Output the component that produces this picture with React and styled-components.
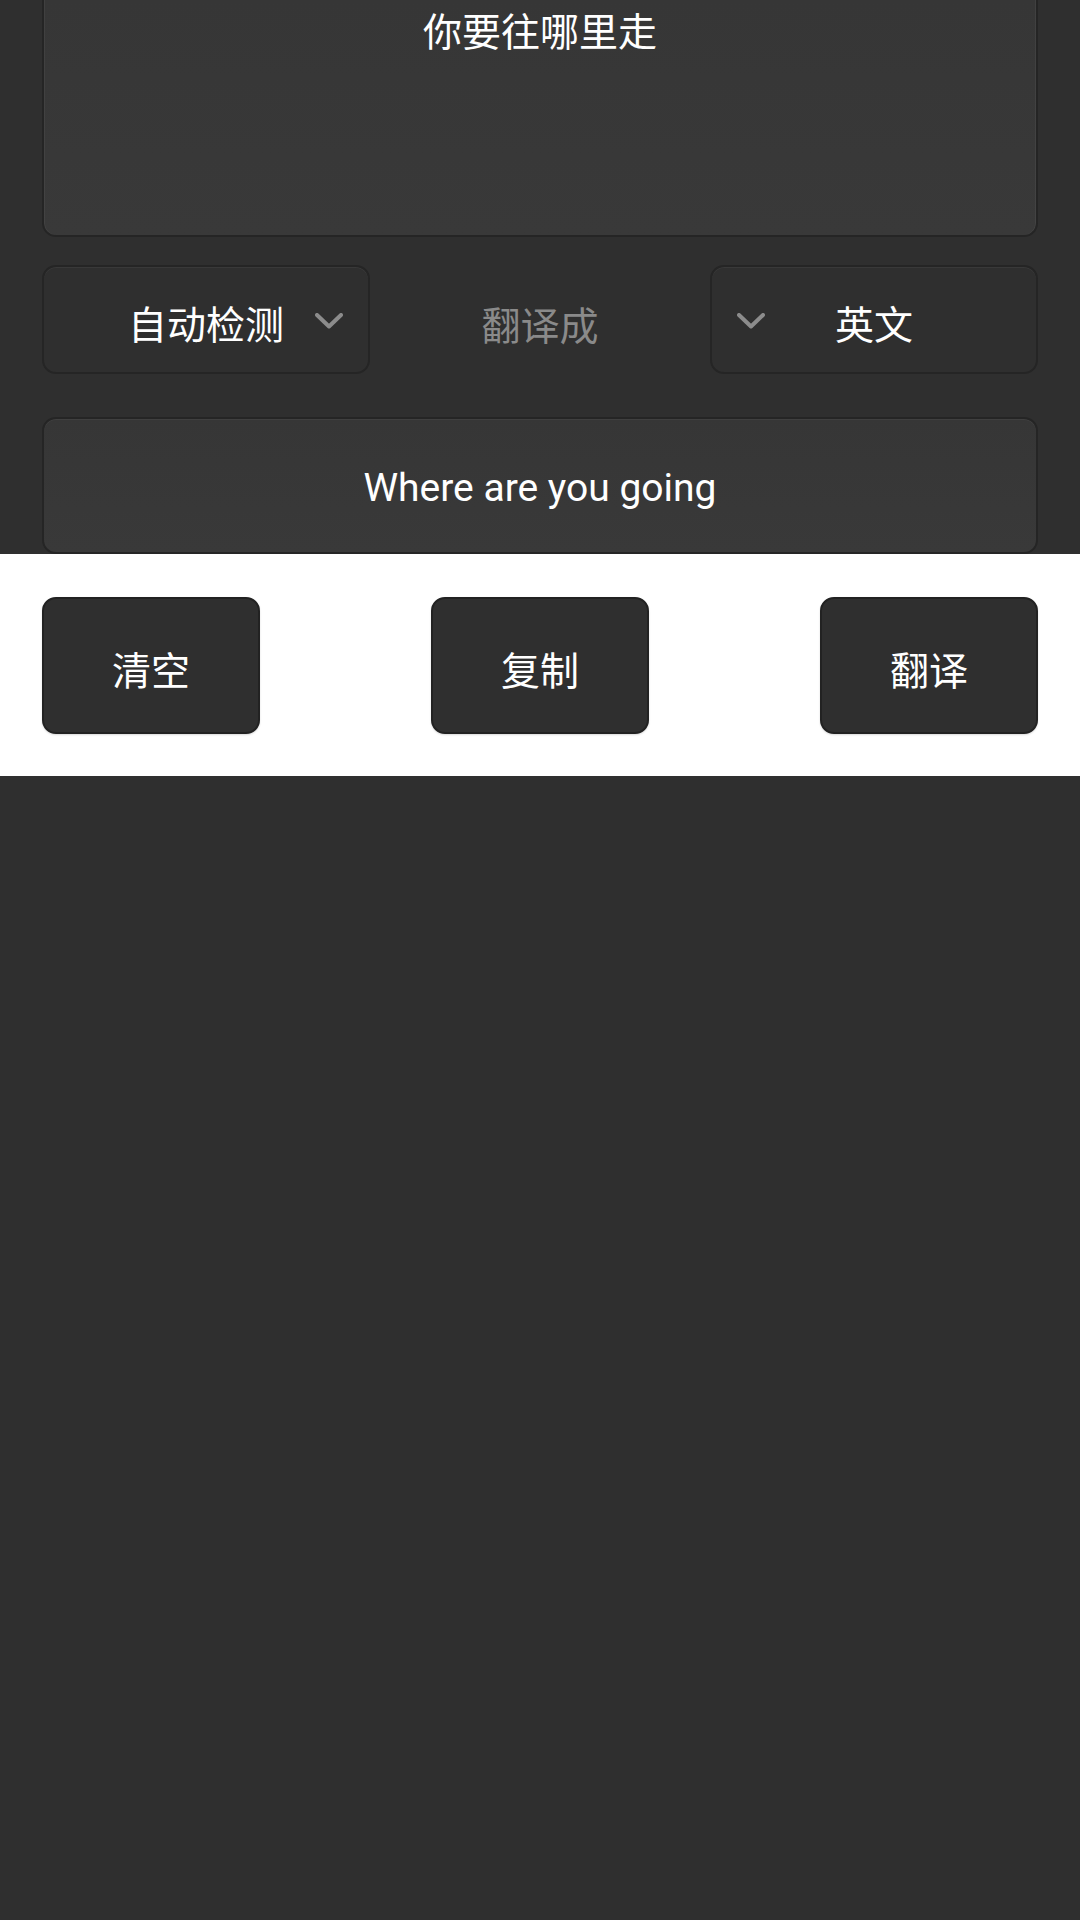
import React from "react";
import styled, { createGlobalStyle } from "styled-components";

const GlobalStyle = createGlobalStyle`
  html, body {
    margin: 0;
    padding: 0;
    background: #2f2f2f;
  }
  body {
    font-family: Roboto, "Noto Sans CJK SC", sans-serif;
    color: #ffffff;
  }
`;

let Page = styled.div`
  min-height: 1920px;
  background: #2f2f2f;
`;

let Panel = styled.div`
  padding: 0 42px;
  display: flex;
  flex-direction: column;
`;

let SourceBox = styled.div`
  height: 237px;
  box-sizing: border-box;
  background: linear-gradient(180deg, #363636 0%, #393939 100%);
  border: 2px solid #252525;
  border-top: none;
  border-radius: 0 0 14px 14px;
  box-shadow: inset 1px 0 0 rgba(255, 255, 255, 0.05), inset -1px 0 0 rgba(255, 255, 255, 0.05);
  padding-top: 8px;
  text-align: center;
  font-size: 39px;
  line-height: 50px;
`;

let LangRow = styled.div`
  margin-top: 28px;
  height: 109px;
  display: grid;
  grid-template-columns: 328px 1fr 328px;
  align-items: center;
`;

let LangSelect = styled.div`
  height: 109px;
  box-sizing: border-box;
  border: 2px solid #252525;
  border-radius: 14px;
  background: #2f2f2f;
  box-shadow: inset 0 1px 0 rgba(255, 255, 255, 0.05);
  padding: 0 25px;
  display: grid;
  grid-template-columns: 28px 1fr 28px;
  align-items: center;
`;

let LangName = styled.span`
  grid-column: 2;
  text-align: center;
  font-size: 39px;
  padding-top: 4px;
`;

let Arrow = styled.svg`
  grid-column: ${(p) => (p.$side === "left" ? 1 : 3)};
  grid-row: 1;
  width: 28px;
  height: 16px;
  margin-top: 3px;
`;

let ToLabel = styled.div`
  text-align: center;
  font-size: 39px;
  color: #8a8a8a;
  padding-top: 6px;
`;

let ResultBox = styled.div`
  margin-top: 43px;
  height: 137px;
  box-sizing: border-box;
  background: linear-gradient(180deg, #363636 0%, #393939 100%);
  border: 2px solid #252525;
  border-radius: 14px;
  box-shadow: inset 0 1px 0 rgba(255, 255, 255, 0.05);
  display: flex;
  align-items: center;
  justify-content: center;
  padding-top: 4px;
  font-size: 39px;
`;

let ActionBar = styled.div`
  background: #ffffff;
  padding: 43px 42px 42px;
  display: flex;
  justify-content: space-between;
`;

let ActionButton = styled.button`
  width: 218px;
  height: 137px;
  box-sizing: border-box;
  background: #2f2f2f;
  border: 2px solid #222222;
  border-radius: 14px;
  box-shadow: 0 1px 2px rgba(0, 0, 0, 0.15);
  color: #ffffff;
  font-family: Roboto, "Noto Sans CJK SC", sans-serif;
  font-size: 39px;
  padding: 4px 0 0;
  cursor: pointer;
`;

function Chevron({ side }) {
  return (
    <Arrow $side={side} viewBox="0 0 28 16">
      <path
        d="M2 2 L14 13.5 L26 2"
        fill="none"
        stroke="#8c8c8c"
        strokeWidth="4"
        strokeLinecap="round"
        strokeLinejoin="round"
      />
    </Arrow>
  );
}

export default function App() {
  return (
    <Page>
      <GlobalStyle />
      <Panel>
        <SourceBox>你要往哪里走</SourceBox>
        <LangRow>
          <LangSelect>
            <LangName>自动检测</LangName>
            <Chevron side="right" />
          </LangSelect>
          <ToLabel>翻译成</ToLabel>
          <LangSelect>
            <Chevron side="left" />
            <LangName>英文</LangName>
          </LangSelect>
        </LangRow>
        <ResultBox>Where are you going</ResultBox>
      </Panel>
      <ActionBar>
        <ActionButton>清空</ActionButton>
        <ActionButton>复制</ActionButton>
        <ActionButton>翻译</ActionButton>
      </ActionBar>
    </Page>
  );
}
